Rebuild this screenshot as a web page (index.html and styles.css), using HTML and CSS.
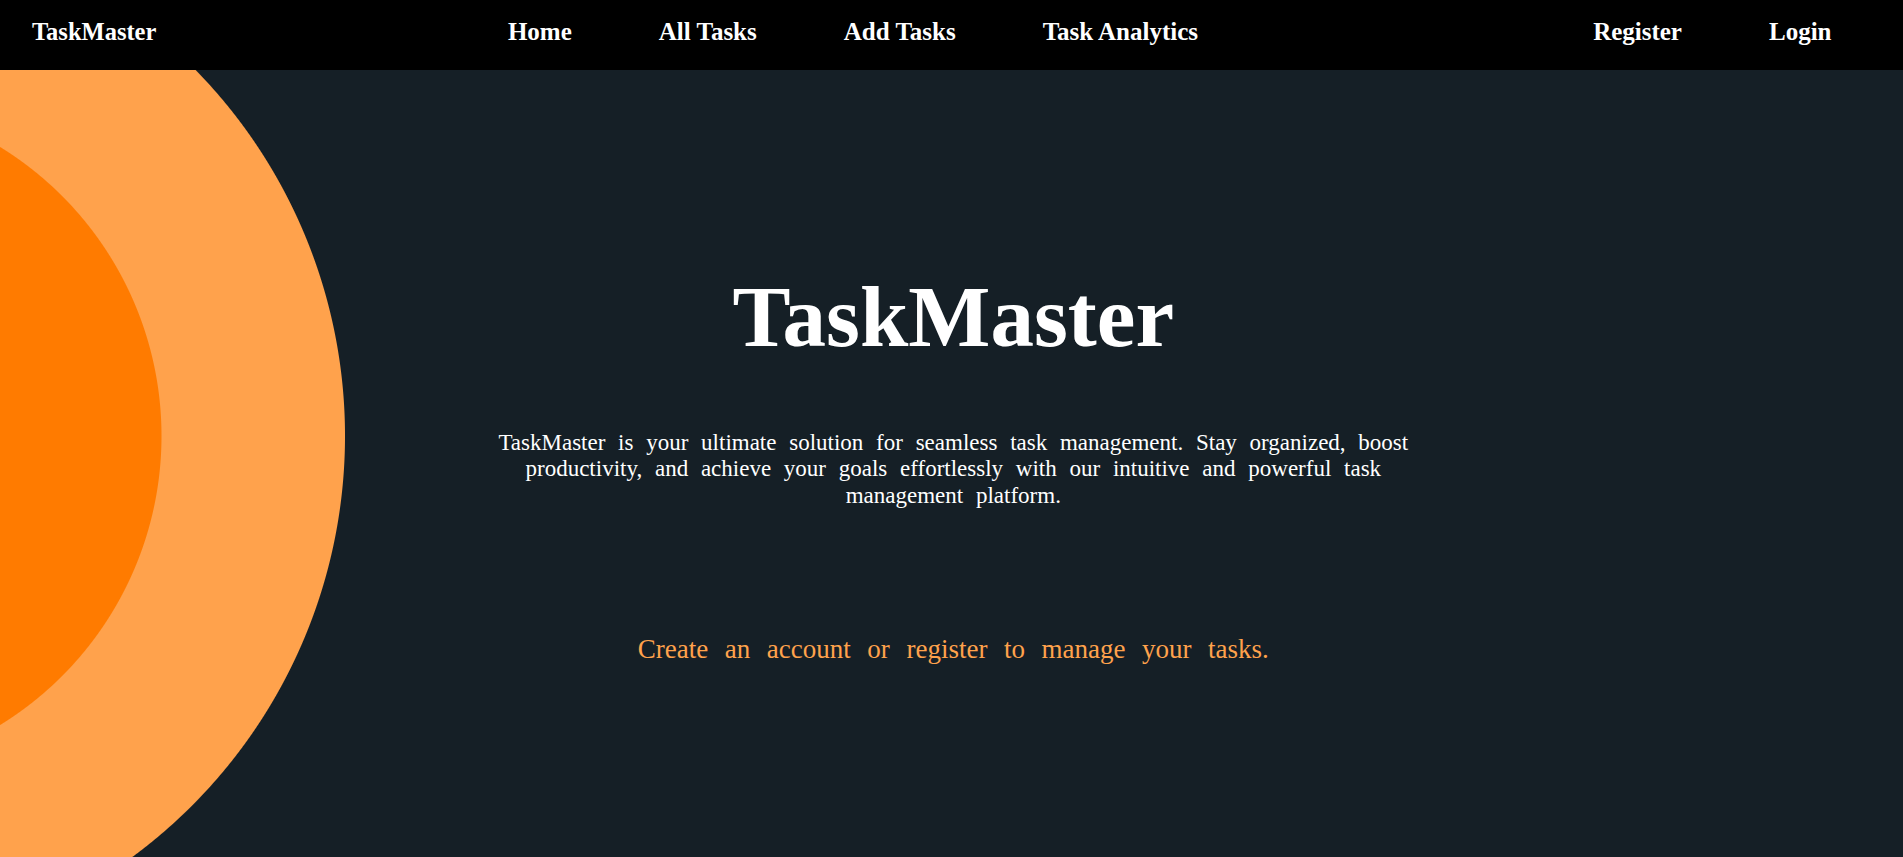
FILE: index.html
```html
<!DOCTYPE html>
<html lang="en">
<head>
<meta charset="utf-8">
<title>TaskMaster</title>
<link rel="stylesheet" href="styles.css">
</head>
<body>
<nav class="navbar">
  <a class="brand" href="#">TaskMaster</a>
  <ul class="nav-links">
    <li><a href="#">Home</a></li>
    <li><a href="#">All Tasks</a></li>
    <li><a href="#">Add Tasks</a></li>
    <li><a href="#">Task Analytics</a></li>
  </ul>
  <ul class="nav-links">
    <li><a href="#">Register</a></li>
    <li><a href="#">Login</a></li>
  </ul>
</nav>
<main class="hero">
  <h1 class="hero-title">TaskMaster</h1>
  <p class="hero-text">TaskMaster is your ultimate solution for seamless task management. Stay organized, boost productivity, and achieve your goals effortlessly with our intuitive and powerful task management platform.</p>
  <p class="hero-cta">Create an account or register to manage your tasks.</p>
</main>
</body>
</html>
```

FILE: styles.css
```css
* {
  box-sizing: border-box;
}

html, body {
  margin: 0;
  padding: 0;
}

body {
  font-family: "Liberation Serif", "Times New Roman", serif;
  background: #151f26;
  color: #ffffff;
  min-height: 100vh;
  display: flex;
  flex-direction: column;
}

.navbar {
  height: 70px;
  background: #000000;
  display: flex;
  justify-content: space-between;
  align-items: flex-start;
  padding: 18px 28px 0 32px;
  flex-shrink: 0;
}

.brand,
.nav-links a {
  color: #ffffff;
  text-decoration: none;
  font-weight: bold;
  font-size: 25px;
  line-height: 28.7px;
}

.brand {
  font-size: 24.5px;
}

.nav-links {
  list-style: none;
  margin: 0;
  padding: 0;
  display: flex;
}

.nav-links a {
  display: block;
  padding: 0 43.5px;
}

.hero {
  flex: 1;
  display: flex;
  flex-direction: column;
  align-items: center;
  padding-left: 3.6px;
  background: radial-gradient(circle at -178px 366px,
    #ff7b00 0, #ff7b00 339px,
    #ffa24c 340px, #ffa24c 522.5px,
    #151f26 523.5px);
}

.hero-title {
  margin: 197px 0 0;
  font-size: 87px;
  line-height: 100px;
  font-weight: bold;
}

.hero-text {
  margin: 62.5px 0 0;
  width: 950px;
  text-align: center;
  font-size: 23px;
  line-height: 26.7px;
  word-spacing: 7px;
}

.hero-cta {
  margin: 124.2px 0 0;
  color: #ffa24c;
  font-size: 27px;
  line-height: 31px;
  word-spacing: 9.8px;
}
```
